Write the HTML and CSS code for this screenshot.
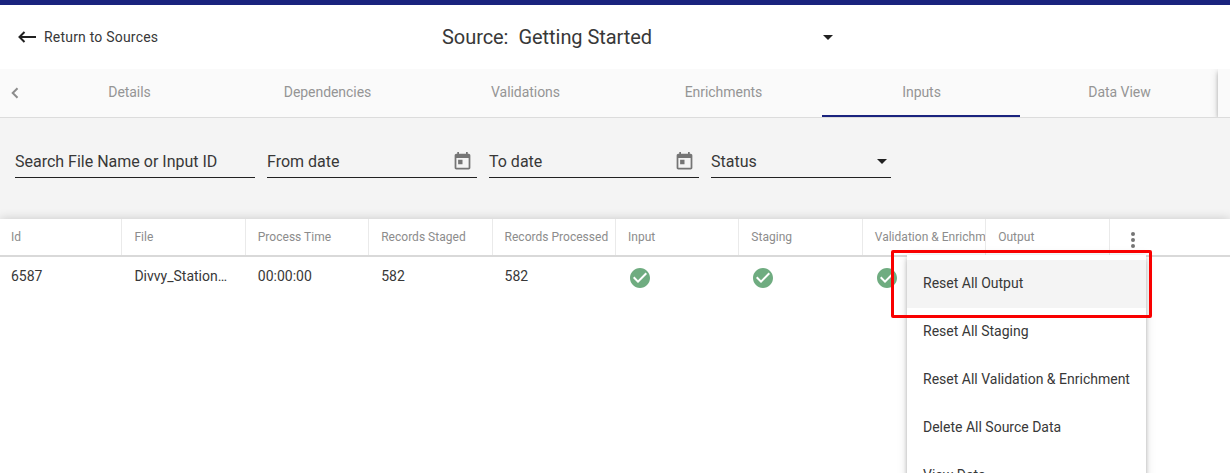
FILE: index.html
```html
<!DOCTYPE html>
<html lang="en">
<head>
<meta charset="utf-8">
<title>Getting Started</title>
<link rel="stylesheet" href="styles.css">
</head>
<body>
<svg class="defs" width="0" height="0">
  <symbol id="calendar" viewBox="0 0 24 24"><path d="M19 3h-1V1h-2v2H8V1H6v2H5c-1.11 0-1.99.9-1.99 2L3 19c0 1.1.89 2 2 2h14c1.1 0 2-.9 2-2V5c0-1.1-.9-2-2-2zm0 16H5V8h14v11zM7 10h5v5H7z"/></symbol>
  <symbol id="check" viewBox="0 0 24 24"><path d="M12 2C6.48 2 2 6.48 2 12s4.48 10 10 10 10-4.480 10-10S17.520 2 12 2zm-2 15l-5-5 1.410-1.410L10 14.170l7.590-7.590L19 8l-9 9z"/></symbol>
</svg>
<div class="topbar"></div>
<header class="header">
  <a class="back">
    <svg class="back-icon" viewBox="0 0 18 12"><path d="M6.500 1L1.500 6l5 5M1.500 6H18"/></svg>
    <span>Return to Sources</span>
  </a>
  <div class="source">
    <span class="source-label">Source:</span>
    <span class="source-name">Getting Started</span>
    <span class="caret"></span>
  </div>
</header>
<nav class="tabs">
  <div class="tab-prev"><svg viewBox="0 0 8 12"><path d="M6.500 1.200L1.700 6l4.800 4.800"/></svg></div>
  <div class="tab">Details</div>
  <div class="tab">Dependencies</div>
  <div class="tab">Validations</div>
  <div class="tab">Enrichments</div>
  <div class="tab active">Inputs</div>
  <div class="tab">Data View</div>
  <div class="tab-next"></div>
</nav>
<section class="filters">
  <div class="field search"><span>Search File Name or Input ID</span></div>
  <div class="field date"><span>From date</span><svg class="cal"><use href="#calendar"/></svg></div>
  <div class="field date"><span>To date</span><svg class="cal"><use href="#calendar"/></svg></div>
  <div class="field status"><span>Status</span><span class="caret"></span></div>
</section>
<main class="table">
  <div class="row head">
    <div class="cell">Id</div>
    <div class="cell">File</div>
    <div class="cell">Process Time</div>
    <div class="cell">Records Staged</div>
    <div class="cell">Records Processed</div>
    <div class="cell">Input</div>
    <div class="cell">Staging</div>
    <div class="cell">Validation &amp; Enrichm</div>
    <div class="cell">Output</div>
    <div class="more"><i></i><i></i><i></i></div>
  </div>
  <div class="row body">
    <div class="cell">6587</div>
    <div class="cell">Divvy_Station…</div>
    <div class="cell">00:00:00</div>
    <div class="cell">582</div>
    <div class="cell">582</div>
    <div class="cell"><svg class="check"><use href="#check"/></svg></div>
    <div class="cell"><svg class="check"><use href="#check"/></svg></div>
    <div class="cell"><svg class="check"><use href="#check"/></svg></div>
    <div class="cell"></div>
  </div>
</main>
<div class="menu">
  <div class="item hover">Reset All Output</div>
  <div class="item">Reset All Staging</div>
  <div class="item">Reset All Validation &amp; Enrichment</div>
  <div class="item">Delete All Source Data</div>
  <div class="item">View Data</div>
</div>
<div class="highlight"></div>
</body>
</html>
```

FILE: styles.css
```css
* { box-sizing: border-box; }
html { height: 473px; overflow: hidden; }
body {
  margin: 0;
  position: relative;
  height: 473px;
  overflow: hidden;
  background: #fff;
  color: #383838;
  font: 14px/20px Roboto, sans-serif;
}
.defs { position: absolute; }
.topbar { height: 5px; background: #1a237e; }
.header {
  height: 64px;
  display: flex;
  align-items: center;
  padding-left: 18px;
}
.back { display: flex; align-items: center; gap: 8px; width: 424px; letter-spacing: .2px; }
.back-icon { width: 18px; height: 12px; fill: none; stroke: #212121; stroke-width: 2; }
.source { display: flex; align-items: center; width: 391px; font-size: 20px; line-height: 24px; letter-spacing: -.06px; }
.source-label { width: 76.5px; }
.caret {
  margin-left: auto;
  border: 5px solid transparent;
  border-top-color: #212121;
  border-bottom: 0;
}
.tabs {
  display: flex;
  height: 49px;
  overflow: hidden;
  background: #fafafa;
  border-bottom: 1px solid #dcdcdc;
  color: #959595;
}
.tab-prev { width: 30px; flex: none; padding: 18px 0 0 11px; }
.tab-prev svg { display: block; width: 8px; height: 12px; fill: none; stroke: #8c8c8c; stroke-width: 2; }
.tab { width: 198px; flex: none; height: 48px; padding: 13px 0 0 1px; text-align: center; letter-spacing: -.05px; }
.active { border-bottom: 2px solid #1a237e; }
.tab-next {
  position: relative;
  width: 12px;
  flex: none;
  background: #fafafa;
  box-shadow: 0 2px 4px -1px rgba(0,0,0,.2), 0 4px 5px rgba(0,0,0,.14), 0 1px 10px rgba(0,0,0,.12);
}
.filters {
  height: 101px;
  padding: 27px 15px 0;
  display: flex;
  align-items: flex-start;
  gap: 12px;
  background: #f4f4f4;
  font-size: 16px;
}
.field { display: flex; align-items: center; height: 33px; padding-top: 1px; border-bottom: 1px solid #212121; }
.search { width: 240px; }
.date { width: 210px; }
.status { width: 180px; padding-right: 4px; }
.cal { width: 21px; height: 21px; margin: 0 4.5px 0 auto; fill: #757575; }
.table { position: relative; box-shadow: 0 0 10px rgba(0,0,0,.18); background: #fff; height: 254px; }
.row { display: flex; }
.cell { flex: none; width: 123.4px; padding-left: 12px; overflow: hidden; white-space: nowrap; }
.cell:first-child { width: 122.4px; padding-left: 11px; }
.head { height: 38px; border-bottom: 2px solid #d9d9d9; font-size: 12px; color: #8c8c8c; }
.head .cell { padding-top: 8px; border-right: 1px solid #eaeaea; letter-spacing: .02px; }
.body .cell { padding-top: 9px; height: 44px; }
.check { display: block; width: 24px; height: 24px; fill: #6fac80; }
.more { display: flex; flex-direction: column; gap: 2px; padding: 13px 0 0 21.5px; }
.more i { width: 4px; height: 4px; border-radius: 50%; background: #757575; }
.menu {
  position: absolute;
  left: 907px;
  top: 255px;
  width: 239px;
  height: 240px;
  padding-top: 5px;
  background: #fff;
  box-shadow: 0 2px 4px -1px rgba(0,0,0,.2), 0 4px 5px rgba(0,0,0,.14), 0 1px 10px rgba(0,0,0,.12);
}
.item { height: 48px; padding-left: 16px; line-height: 46px; white-space: nowrap; }
.hover { background: #f4f4f4; }
.highlight { position: absolute; left: 891px; top: 250px; width: 261px; height: 68px; border: 3px solid #f90000; border-radius: 2px; }
```
